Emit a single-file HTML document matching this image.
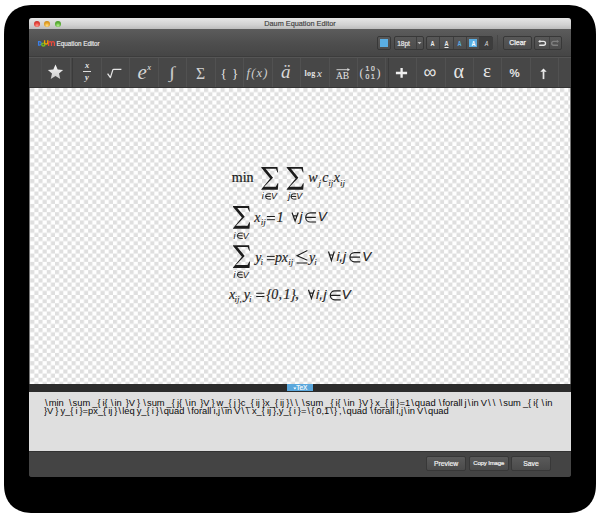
<!DOCTYPE html>
<html><head><meta charset="utf-8">
<style>
*{margin:0;padding:0;box-sizing:border-box}
html,body{width:600px;height:518px;overflow:hidden;background:#fff;font-family:"Liberation Sans",sans-serif}
.a{position:absolute}
#win{left:29px;top:18px;width:542px;height:459px;background:#444;border-radius:3px;overflow:hidden}
#title{left:29px;top:18px;width:542px;height:11px;background:linear-gradient(#e6e6e6,#d2d2d2 60%,#bdbdbd);border-radius:3px 3px 0 0}
.tl{width:6.4px;height:6.4px;border-radius:50%;top:20.5px}
#ttext{left:29px;top:19.2px;width:542px;text-align:center;font-size:7.3px;line-height:9px;color:#3e3e3e;-webkit-text-stroke:0.15px #3e3e3e}
#tb1{left:29px;top:29px;width:542px;height:28px;background:linear-gradient(#5c5c5c,#4e4e4e 50%,#454545)}
#tb2{left:29px;top:56px;width:542px;height:32px;background:#474747;border-top:1px solid #3c3c3c;border-bottom:1px solid #343434;box-shadow:inset 0 1px 0 #555}
.div{width:1px;top:58px;height:29px;background:#515151}
#darkbar{left:29px;top:384px;width:542px;height:7.5px;background:#2b2b2b}
#tab{left:287px;top:384px;width:26px;height:7px;background:#5aa7dc;color:#fff;font-size:6px;line-height:7px;text-align:center}
#texta{left:29px;top:391.5px;width:542px;height:59.5px;background:#dfdfdf}
#code{left:44px;top:398.7px;width:530px;font-size:8.6px;line-height:8.7px;color:#0a0a0a;white-space:pre;transform:scaleX(1.0855);transform-origin:0 0;word-spacing:-0.543px}
#code i{font-style:normal;padding:0 1.012px}
#bbar{left:29px;top:451px;width:542px;height:26px;background:#444;border-top:1px solid #333;border-radius:0 0 3px 3px}
.btn{top:456px;height:15px;width:40px;border-radius:2px;background:linear-gradient(#5a5a5a,#4b4b4b);border:1px solid #383838;color:#f0f0f0;font-size:6.8px;line-height:13.6px;text-align:center;-webkit-text-stroke:0.2px #f0f0f0}
.tbtn{border-radius:2px;background:linear-gradient(#585858,#4c4c4c);border:1px solid #383838}
.ic{color:#e6e6e6}
</style></head><body>
<svg id="shadow" class="a" style="left:0;top:0" width="600" height="518"><path d="M4.00 35.00 L4.05 31.91 L4.21 29.50 L4.48 27.31 L4.85 25.27 L5.33 23.35 L5.92 21.53 L6.60 19.80 L7.39 18.16 L8.28 16.62 L9.26 15.16 L10.35 13.80 L11.53 12.53 L12.80 11.35 L14.16 10.26 L15.62 9.28 L17.16 8.39 L18.80 7.60 L20.53 6.92 L22.35 6.33 L24.27 5.85 L26.31 5.48 L28.50 5.21 L30.91 5.05 L34.00 5.00 L566.00 5.00 L569.09 5.05 L571.50 5.21 L573.69 5.48 L575.73 5.85 L577.65 6.33 L579.47 6.92 L581.20 7.60 L582.84 8.39 L584.38 9.28 L585.84 10.26 L587.20 11.35 L588.47 12.53 L589.65 13.80 L590.74 15.16 L591.72 16.62 L592.61 18.16 L593.40 19.80 L594.08 21.53 L594.67 23.35 L595.15 25.27 L595.52 27.31 L595.79 29.50 L595.95 31.91 L596.00 35.00 L596.00 483.00 L595.95 486.09 L595.79 488.50 L595.52 490.69 L595.15 492.73 L594.67 494.65 L594.08 496.47 L593.40 498.20 L592.61 499.84 L591.72 501.38 L590.74 502.84 L589.65 504.20 L588.47 505.47 L587.20 506.65 L585.84 507.74 L584.38 508.72 L582.84 509.61 L581.20 510.40 L579.47 511.08 L577.65 511.67 L575.73 512.15 L573.69 512.52 L571.50 512.79 L569.09 512.95 L566.00 513.00 L34.00 513.00 L30.91 512.95 L28.50 512.79 L26.31 512.52 L24.27 512.15 L22.35 511.67 L20.53 511.08 L18.80 510.40 L17.16 509.61 L15.62 508.72 L14.16 507.74 L12.80 506.65 L11.53 505.47 L10.35 504.20 L9.26 502.84 L8.28 501.38 L7.39 499.84 L6.60 498.20 L5.92 496.47 L5.33 494.65 L4.85 492.73 L4.48 490.69 L4.21 488.50 L4.05 486.09 L4.00 483.00Z" fill="#000"/></svg>
<div id="win" class="a"></div>
<div id="title" class="a"></div>
<div class="a tl" style="left:33.8px;background:radial-gradient(circle at 50% 75%,#ff9c8c,#e8473f 45%,#c8302a 80%,#8e1f1b)"></div>
<div class="a tl" style="left:44.1px;background:radial-gradient(circle at 50% 75%,#ffe28a,#e8a52a 45%,#cc8a18 80%,#8c5a0a)"></div>
<div class="a tl" style="left:54.6px;background:radial-gradient(circle at 50% 75%,#b8f090,#62b53c 45%,#4a9a2a 80%,#2e6a18)"></div>
<div id="ttext" class="a">Daum Equation Editor</div>
<div id="tb1" class="a"></div>
<div id="tb2" class="a"></div>
<svg class="a" style="left:37px;top:39px" width="19" height="9" viewBox="0 0 19 9">
 <path d="M1.6 2.6 h0.8 a1.75 1.75 0 0 1 0 3.5 h-0.8 z" fill="none" stroke="#3b7fe8" stroke-width="1.3"/>
 <circle cx="6.2" cy="5.6" r="1.45" fill="none" stroke="#78c020" stroke-width="1.3"/><path d="M7.65 4.0 v3.3" stroke="#78c020" stroke-width="1.3"/>
 <path d="M7.6 1.2 v2.2 a1.6 1.6 0 0 0 3.2 0 v-2.2 M10.8 3.4 v1.6" fill="none" stroke="#f2a600" stroke-width="1.3"/>
 <path d="M11.6 2.6 v4.4 M11.6 4.1 a1.45 1.45 0 0 1 2.9 0 v2.9 M14.5 4.1 a1.45 1.45 0 0 1 2.9 0 v2.9" fill="none" stroke="#e84a3c" stroke-width="1.3"/>
</svg>
<div class="a" style="left:56.6px;top:39.5px;font-size:6.3px;line-height:8px;color:#ececec;-webkit-text-stroke:0.15px #ececec">Equation Editor</div>
<div class="a tbtn" style="left:376.5px;top:36.3px;width:14px;height:13.4px"></div>
<div class="a" style="left:380px;top:39px;width:7.5px;height:7.7px;background:#5aaee3"></div>
<div class="a tbtn" style="left:394px;top:36.3px;width:29.5px;height:13.4px"></div>
<div class="a" style="left:415.5px;top:37px;width:1px;height:12px;background:#3e3e3e"></div>
<div class="a" style="left:397.3px;top:38.6px;font-size:6.6px;line-height:9px;color:#e8e8e8;letter-spacing:-0.1px;-webkit-text-stroke:0.2px #e8e8e8">18pt</div>
<svg class="a" style="left:417px;top:41px" width="5" height="4"><path d="M0.5 1 h4 l-2 2.2z" fill="#bbb"/></svg>
<div class="a tbtn" style="left:425.5px;top:36.3px;width:67.5px;height:13.4px"></div>
<div class="a" style="left:479.5px;top:37px;width:13px;height:12px;background:#3d3d3d"></div>
<div class="a" style="left:439px;top:37px;width:1px;height:12px;background:#3e3e3e"></div>
<div class="a" style="left:452.5px;top:37px;width:1px;height:12px;background:#3e3e3e"></div>
<div class="a" style="left:466px;top:37px;width:1px;height:12px;background:#3e3e3e"></div>
<div class="a" style="left:479px;top:37px;width:1px;height:12px;background:#3e3e3e"></div>
<div class="a" style="left:468.8px;top:38.7px;width:8px;height:8.8px;background:#5aaee3"></div>
<div class="a" style="left:426px;top:38.8px;width:13px;text-align:center;font-size:6.8px;line-height:9px;transform:scaleX(0.82);color:#eee;font-weight:bold">A</div>
<div class="a" style="left:439.5px;top:38.8px;width:13px;text-align:center;font-size:6.8px;line-height:9px;transform:scaleX(0.82);color:#eee;font-weight:bold;text-decoration:underline">A</div>
<div class="a" style="left:453px;top:38.8px;width:13px;text-align:center;font-size:6.8px;line-height:9px;transform:scaleX(0.82);color:#5aaee3;font-weight:bold">A</div>
<div class="a" style="left:466.5px;top:38.8px;width:13px;text-align:center;font-size:6.8px;line-height:9px;transform:scaleX(0.82);color:#fff;font-weight:bold">A</div>
<div class="a" style="left:480px;top:38.8px;width:13px;text-align:center;font-size:6.8px;line-height:9px;transform:scaleX(0.82);color:#ddd;font-style:italic">A</div>
<div class="a" style="left:497px;top:35px;width:1px;height:16px;background:#474747"></div>
<div class="a tbtn" style="left:502.7px;top:36.3px;width:29.7px;height:13.4px;color:#f2f2f2;font-size:7px;line-height:11.6px;text-align:center;-webkit-text-stroke:0.25px #f2f2f2">Clear</div>
<div class="a tbtn" style="left:534.4px;top:36.3px;width:27.6px;height:13.4px"></div>
<div class="a" style="left:548.5px;top:37px;width:1px;height:12px;background:#424242"></div>
<svg class="a" style="left:537px;top:38px" width="24" height="10" viewBox="0 0 24 10">
 <path d="M2.6 3.4 h4.0 a1.9 1.9 0 0 1 0 3.8 h-4.4" fill="none" stroke="#e6e6e6" stroke-width="1.35"/><path d="M1.2 3.4 l2.1 -1.7 v3.4z" fill="#e6e6e6"/>
 <path d="M20.6 3.4 h-4.0 a1.9 1.9 0 0 0 0 3.8 h4.4" fill="none" stroke="#808080" stroke-width="1.35"/><path d="M22 3.4 l-2.1 -1.7 v3.4z" fill="#808080"/>
</svg>

<div class="a div" style="left:41.0px;background:#4c4c4c"></div><div class="a div" style="left:70.0px"></div><div class="a div" style="left:72.0px;background:#3b3b3b"></div><div class="a div" style="left:100.5px"></div><div class="a div" style="left:129.0px"></div><div class="a div" style="left:157.5px"></div><div class="a div" style="left:186.0px"></div><div class="a div" style="left:214.5px"></div><div class="a div" style="left:243.0px"></div><div class="a div" style="left:271.5px"></div><div class="a div" style="left:300.0px"></div><div class="a div" style="left:328.5px"></div><div class="a div" style="left:357.0px"></div><div class="a div" style="left:385.0px"></div><div class="a div" style="left:388.0px;background:#3b3b3b"></div><div class="a div" style="left:416.0px"></div><div class="a div" style="left:444.5px"></div><div class="a div" style="left:472.5px"></div><div class="a div" style="left:501.0px"></div><div class="a div" style="left:529.5px"></div><div class="a div" style="left:557.5px"></div>
<svg class="a" style="left:47px;top:64px" width="17" height="16" viewBox="0.3 0 16.4 15.5"><defs><linearGradient id="sg" x1="0" y1="0" x2="0" y2="1"><stop offset="0" stop-color="#fafafa"/><stop offset="1" stop-color="#c8c8c8"/></linearGradient></defs>
<path d="M8.5 0.5 L10.6 5.4 L15.9 5.8 L11.9 9.3 L13.1 14.5 L8.5 11.7 L3.9 14.5 L5.1 9.3 L1.1 5.8 L6.4 5.4 Z" fill="url(#sg)"/></svg>
<div class="a ic" style="left:82px;top:61.3px;width:10px;text-align:center;font:italic bold 8.5px/8px 'Liberation Serif',serif;color:#e8e8e8">x</div>
<div class="a" style="left:82.7px;top:71.2px;width:8px;height:1px;background:#ddd"></div>
<div class="a ic" style="left:82px;top:73.3px;width:10px;text-align:center;font:italic bold 8.5px/8px 'Liberation Serif',serif;color:#e8e8e8">y</div>
<svg class="a" style="left:106px;top:68px" width="17" height="12" viewBox="0 0 17 12"><path d="M1.6 5.6 L4.4 9.6 L6.9 1.6 Q7.1 1.4 7.6 1.4 H15.4" fill="none" stroke="#e4e4e4" stroke-width="1.25" stroke-linejoin="round"/></svg>
<div class="a ic" style="left:137.4px;top:61px;font:italic 21px/22px 'Liberation Serif',serif;color:#d4d4d4">e</div>
<div class="a ic" style="left:147.3px;top:62.6px;font:italic 8.5px/8px 'Liberation Serif',serif">x</div>
<div class="a ic" style="left:168.5px;top:64px;font:16.5px/18px 'Liberation Serif',serif;color:#c8c8c8;transform:scaleX(1.3);transform-origin:0 0">&#8747;</div>
<div class="a ic" style="left:195.6px;top:64.3px;font:16.5px/20px 'Liberation Serif',serif;color:#d0d0d0;transform:scaleX(0.95);transform-origin:0 0">&#931;</div>
<div class="a ic" style="left:220.5px;top:65.5px;font:13px/16px 'Liberation Serif',serif">{</div><div class="a ic" style="left:232px;top:65.5px;font:13px/16px 'Liberation Serif',serif">}</div>
<div class="a ic" style="left:246.5px;top:64.5px;font:italic 12.5px/16px 'Liberation Serif',serif;color:#d0d0d0;letter-spacing:1.2px">f(x)</div>
<div class="a ic" style="left:281px;top:61px;font:italic 19px/22px 'Liberation Serif',serif;color:#d8d8d8">&#228;</div>
<div class="a ic" style="left:304.5px;top:67.5px;font:bold 8px/12px 'Liberation Serif',serif;letter-spacing:0.3px">log</div>
<div class="a ic" style="left:317px;top:65.5px;font:italic 11px/14px 'Liberation Serif',serif">x</div>
<svg class="a" style="left:336px;top:66.5px" width="15" height="5" viewBox="0 0 15 5"><path d="M0.5 2.7 h12" stroke="#ddd" stroke-width="0.9"/><path d="M14 2.7 l-2.6 -1.6 v3.2z" fill="#ddd"/></svg>
<div class="a ic" style="left:336px;top:71px;font:9.5px/10px 'Liberation Serif',serif">AB</div>
<div class="a ic" style="left:359.5px;top:66px;font:12px/14px 'Liberation Serif',serif;color:#ddd">(</div>
<div class="a ic" style="left:376.5px;top:66px;font:12px/14px 'Liberation Serif',serif;color:#ddd">)</div>
<div class="a ic" style="left:365.5px;top:66.2px;font:6.8px/6px 'Liberation Sans',sans-serif;color:#e0e0e0;letter-spacing:1.6px;-webkit-text-stroke:0.2px #e0e0e0">10</div>
<div class="a ic" style="left:365.5px;top:74.3px;font:6.8px/6px 'Liberation Sans',sans-serif;color:#e0e0e0;letter-spacing:1.6px;-webkit-text-stroke:0.2px #e0e0e0">01</div>
<svg class="a" style="left:395px;top:67px" width="13" height="12" viewBox="0 0 13 12"><path d="M6.6 1.0 v9.8 M0.9 6.0 h11.2" stroke="#f0f0f0" stroke-width="2.3"/></svg>
<div class="a ic" style="left:423.5px;top:61.5px;font:18px/20px 'Liberation Sans',sans-serif">&#8734;</div>
<div class="a ic" style="left:453.5px;top:58.5px;font:20px/24px 'Liberation Serif',serif">&#945;</div>
<div class="a ic" style="left:483px;top:58.5px;font:19px/24px 'Liberation Serif',serif">&#949;</div>
<div class="a ic" style="left:509.5px;top:66px;font:bold 11.5px/14px 'Liberation Sans',sans-serif">%</div>
<svg class="a" style="left:540.3px;top:67.5px" width="7" height="12" viewBox="0 0 7 12"><path d="M3.5 3.5 v7.6" stroke="#e8e8e8" stroke-width="1.7"/><path d="M3.5 0.4 l3.2 3.3 h-6.4z" fill="#f0f0f0"/></svg>
<svg id="canvas" class="a" width="542" height="296" style="left:29px;top:88px"><defs><pattern id="ck" x="1.2" y="0" width="8.278" height="8.278" patternUnits="userSpaceOnUse"><rect width="8.278" height="8.278" fill="#fff"/><rect width="4.139" height="4.139" fill="#dfdfdf"/><rect x="4.139" y="4.139" width="4.139" height="4.139" fill="#dfdfdf"/></pattern></defs><rect width="542" height="296" fill="url(#ck)"/><rect x="0" y="0" width="1" height="296" fill="#777"/><rect x="541" y="0" width="1" height="296" fill="#777"/></svg>
<!--EQ--><svg class="a" style="left:0;top:0" width="600" height="518"><text x="231.81" y="182.20" font-family="'Liberation Serif',serif" font-size="14.00" fill="#1c1c1c" stroke="#1c1c1c" stroke-width="0.22">min</text><path d="M261.30 167.00 L277.42 167.00 L278.10 172.38 L277.52 172.38 L275.96 168.79 L265.60 168.79 L273.02 177.65 L264.23 186.81 L275.76 186.81 L277.71 183.23 L278.30 183.23 L277.81 189.80 L261.30 189.80 L261.30 189.30 L270.19 178.45 L261.30 167.80Z" fill="#1c1c1c"/><text x="261.76" y="199.30" font-family="'Liberation Sans',sans-serif" font-size="8.80" font-style="italic" fill="#1c1c1c" stroke="#1c1c1c" stroke-width="0.05">i</text><path d="M271.00 193.80 H268.25 A2.65 2.65 0 0 0 268.25 199.10 H271.00 M265.60 196.45 H270.70" fill="none" stroke="#1c1c1c" stroke-width="1.00"/><text x="270.94" y="199.30" font-family="'Liberation Sans',sans-serif" font-size="8.80" font-style="italic" fill="#1c1c1c" stroke="#1c1c1c" stroke-width="0.05">V</text><path d="M286.70 167.00 L302.82 167.00 L303.50 172.38 L302.92 172.38 L301.36 168.79 L291.00 168.79 L298.42 177.65 L289.63 186.81 L301.16 186.81 L303.11 183.23 L303.70 183.23 L303.21 189.80 L286.70 189.80 L286.70 189.30 L295.59 178.45 L286.70 167.80Z" fill="#1c1c1c"/><text x="288.28" y="199.30" font-family="'Liberation Sans',sans-serif" font-size="8.80" font-style="italic" fill="#1c1c1c" stroke="#1c1c1c" stroke-width="0.05">j</text><path d="M296.40 193.80 H293.65 A2.65 2.65 0 0 0 293.65 199.10 H296.40 M291.00 196.45 H296.10" fill="none" stroke="#1c1c1c" stroke-width="1.00"/><text x="296.34" y="199.30" font-family="'Liberation Sans',sans-serif" font-size="8.80" font-style="italic" fill="#1c1c1c" stroke="#1c1c1c" stroke-width="0.05">V</text><text x="308.27" y="181.80" font-family="'Liberation Serif',serif" font-size="14.00" font-style="italic" fill="#1c1c1c" stroke="#1c1c1c" stroke-width="0.14">w</text><text x="318.46" y="185.70" font-family="'Liberation Serif',serif" font-size="9.00" font-style="italic" fill="#1c1c1c" stroke="#1c1c1c" stroke-width="0.05">j</text><text x="322.37" y="181.80" font-family="'Liberation Serif',serif" font-size="14.00" font-style="italic" fill="#1c1c1c" stroke="#1c1c1c" stroke-width="0.14">c</text><text x="328.30" y="185.70" font-family="'Liberation Serif',serif" font-size="9.00" font-style="italic" fill="#1c1c1c" stroke="#1c1c1c" stroke-width="0.05">ij</text><text x="333.77" y="181.80" font-family="'Liberation Serif',serif" font-size="14.00" font-style="italic" fill="#1c1c1c" stroke="#1c1c1c" stroke-width="0.14">x</text><text x="340.10" y="185.70" font-family="'Liberation Serif',serif" font-size="9.00" font-style="italic" fill="#1c1c1c" stroke="#1c1c1c" stroke-width="0.05">ij</text><path d="M233.00 206.10 L249.12 206.10 L249.80 211.45 L249.22 211.45 L247.66 207.88 L237.30 207.88 L244.72 216.71 L235.93 225.83 L247.46 225.83 L249.41 222.26 L250.00 222.26 L249.51 228.80 L233.00 228.80 L233.00 228.30 L241.89 217.50 L233.00 206.89Z" fill="#1c1c1c"/><text x="233.56" y="238.60" font-family="'Liberation Sans',sans-serif" font-size="8.80" font-style="italic" fill="#1c1c1c" stroke="#1c1c1c" stroke-width="0.05">i</text><path d="M242.80 233.10 H240.05 A2.65 2.65 0 0 0 240.05 238.40 H242.80 M237.40 235.75 H242.50" fill="none" stroke="#1c1c1c" stroke-width="1.00"/><text x="242.74" y="238.60" font-family="'Liberation Sans',sans-serif" font-size="8.80" font-style="italic" fill="#1c1c1c" stroke="#1c1c1c" stroke-width="0.05">V</text><text x="254.27" y="221.50" font-family="'Liberation Serif',serif" font-size="14.00" font-style="italic" fill="#1c1c1c" stroke="#1c1c1c" stroke-width="0.14">x</text><text x="260.70" y="224.60" font-family="'Liberation Serif',serif" font-size="9.00" font-style="italic" fill="#1c1c1c" stroke="#1c1c1c" stroke-width="0.05">ij</text><path d="M266.90 216.50 H274.90 M266.90 219.70 H274.90" fill="none" stroke="#1c1c1c" stroke-width="1.00"/><text x="276.48" y="221.60" font-family="'Liberation Serif',serif" font-size="14.50" font-style="italic" fill="#1c1c1c" stroke="#1c1c1c" stroke-width="0.14">1</text><path d="M291.98 212.46 L295.10 221.04 L298.22 212.46 M293.42 215.82 H296.78" fill="none" stroke="#1c1c1c" stroke-width="1.20"/><text x="299.40" y="221.40" font-family="'Liberation Sans',sans-serif" font-size="13.40" font-style="italic" fill="#1c1c1c" stroke="#1c1c1c" stroke-width="0.14">j</text><path d="M316.10 212.80 H310.30 A4.60 4.60 0 0 0 310.30 222.00 H316.10 M305.70 217.40 H315.80" fill="none" stroke="#1c1c1c" stroke-width="1.20"/><text x="317.74" y="221.40" font-family="'Liberation Sans',sans-serif" font-size="13.40" font-style="italic" fill="#1c1c1c" stroke="#1c1c1c" stroke-width="0.14">V</text><path d="M233.00 245.30 L249.12 245.30 L249.80 250.68 L249.22 250.68 L247.66 247.09 L237.30 247.09 L244.72 255.95 L235.93 265.11 L247.46 265.11 L249.41 261.53 L250.00 261.53 L249.51 268.10 L233.00 268.10 L233.00 267.60 L241.89 256.75 L233.00 246.10Z" fill="#1c1c1c"/><text x="233.56" y="277.60" font-family="'Liberation Sans',sans-serif" font-size="8.80" font-style="italic" fill="#1c1c1c" stroke="#1c1c1c" stroke-width="0.05">i</text><path d="M242.80 272.10 H240.05 A2.65 2.65 0 0 0 240.05 277.40 H242.80 M237.40 274.75 H242.50" fill="none" stroke="#1c1c1c" stroke-width="1.00"/><text x="242.74" y="277.60" font-family="'Liberation Sans',sans-serif" font-size="8.80" font-style="italic" fill="#1c1c1c" stroke="#1c1c1c" stroke-width="0.05">V</text><text x="255.37" y="261.50" font-family="'Liberation Serif',serif" font-size="14.00" font-style="italic" fill="#1c1c1c" stroke="#1c1c1c" stroke-width="0.14">y</text><text x="260.50" y="264.50" font-family="'Liberation Serif',serif" font-size="9.00" font-style="italic" fill="#1c1c1c" stroke="#1c1c1c" stroke-width="0.05">i</text><path d="M266.90 256.40 H274.70 M266.90 259.70 H274.70" fill="none" stroke="#1c1c1c" stroke-width="1.00"/><text x="275.12" y="261.50" font-family="'Liberation Serif',serif" font-size="14.00" font-style="italic" fill="#1c1c1c" stroke="#1c1c1c" stroke-width="0.14">p</text><text x="281.77" y="261.50" font-family="'Liberation Serif',serif" font-size="14.00" font-style="italic" fill="#1c1c1c" stroke="#1c1c1c" stroke-width="0.14">x</text><text x="288.30" y="264.50" font-family="'Liberation Serif',serif" font-size="9.00" font-style="italic" fill="#1c1c1c" stroke="#1c1c1c" stroke-width="0.05">ij</text><path d="M307.40 250.50 L297.06 255.70 L307.40 260.25 M296.60 262.95 H307.40" fill="none" stroke="#1c1c1c" stroke-width="1.10"/><text x="309.07" y="261.50" font-family="'Liberation Serif',serif" font-size="14.00" font-style="italic" fill="#1c1c1c" stroke="#1c1c1c" stroke-width="0.14">y</text><text x="314.20" y="264.50" font-family="'Liberation Serif',serif" font-size="9.00" font-style="italic" fill="#1c1c1c" stroke="#1c1c1c" stroke-width="0.05">i</text><path d="M328.48 251.46 L331.40 260.44 L334.32 251.46 M329.84 254.98 H332.96" fill="none" stroke="#1c1c1c" stroke-width="1.20"/><text x="336.38" y="260.90" font-family="'Liberation Sans',sans-serif" font-size="13.40" font-style="italic" fill="#1c1c1c" stroke="#1c1c1c" stroke-width="0.14">i</text><text x="339.26" y="260.90" font-family="'Liberation Sans',sans-serif" font-size="13.40" font-style="italic" fill="#1c1c1c" stroke="#1c1c1c" stroke-width="0.14">,</text><text x="343.10" y="260.90" font-family="'Liberation Sans',sans-serif" font-size="13.40" font-style="italic" fill="#1c1c1c" stroke="#1c1c1c" stroke-width="0.14">j</text><path d="M360.30 252.60 H354.50 A4.60 4.60 0 0 0 354.50 261.80 H360.30 M349.90 257.20 H360.00" fill="none" stroke="#1c1c1c" stroke-width="1.20"/><text x="362.14" y="260.90" font-family="'Liberation Sans',sans-serif" font-size="13.40" font-style="italic" fill="#1c1c1c" stroke="#1c1c1c" stroke-width="0.14">V</text><text x="228.97" y="298.80" font-family="'Liberation Serif',serif" font-size="14.00" font-style="italic" fill="#1c1c1c" stroke="#1c1c1c" stroke-width="0.14">x</text><text x="234.60" y="301.80" font-family="'Liberation Serif',serif" font-size="9.00" font-style="italic" fill="#1c1c1c" stroke="#1c1c1c" stroke-width="0.05">ij,</text><text x="243.87" y="298.80" font-family="'Liberation Serif',serif" font-size="14.00" font-style="italic" fill="#1c1c1c" stroke="#1c1c1c" stroke-width="0.14">y</text><text x="249.10" y="301.80" font-family="'Liberation Serif',serif" font-size="9.00" font-style="italic" fill="#1c1c1c" stroke="#1c1c1c" stroke-width="0.05">i</text><path d="M256.20 293.30 H264.40 M256.20 296.50 H264.40" fill="none" stroke="#1c1c1c" stroke-width="1.00"/><text x="266.35" y="298.80" font-family="'Liberation Serif',serif" font-size="14.00" font-style="italic" fill="#1c1c1c" stroke="#1c1c1c" stroke-width="0.14">{</text><text x="271.36" y="298.80" font-family="'Liberation Serif',serif" font-size="14.00" font-style="italic" fill="#1c1c1c" stroke="#1c1c1c" stroke-width="0.14">0</text><text x="278.44" y="298.80" font-family="'Liberation Serif',serif" font-size="14.00" font-style="italic" fill="#1c1c1c" stroke="#1c1c1c" stroke-width="0.14">,</text><text x="283.18" y="298.90" font-family="'Liberation Serif',serif" font-size="14.50" font-style="italic" fill="#1c1c1c" stroke="#1c1c1c" stroke-width="0.14">1</text><text x="290.25" y="298.80" font-family="'Liberation Serif',serif" font-size="14.00" font-style="italic" fill="#1c1c1c" stroke="#1c1c1c" stroke-width="0.14">}</text><text x="295.27" y="298.80" font-family="'Liberation Serif',serif" font-size="14.00" fill="#1c1c1c" stroke="#1c1c1c" stroke-width="0.22">,</text><path d="M308.48 289.76 L311.40 298.44 L314.32 289.76 M309.84 293.16 H312.96" fill="none" stroke="#1c1c1c" stroke-width="1.20"/><text x="315.88" y="298.80" font-family="'Liberation Sans',sans-serif" font-size="13.40" font-style="italic" fill="#1c1c1c" stroke="#1c1c1c" stroke-width="0.14">i</text><text x="319.26" y="298.80" font-family="'Liberation Sans',sans-serif" font-size="13.40" font-style="italic" fill="#1c1c1c" stroke="#1c1c1c" stroke-width="0.14">,</text><text x="323.40" y="298.80" font-family="'Liberation Sans',sans-serif" font-size="13.40" font-style="italic" fill="#1c1c1c" stroke="#1c1c1c" stroke-width="0.14">j</text><path d="M340.70 290.80 H334.80 A4.50 4.50 0 0 0 334.80 299.80 H340.70 M330.30 295.30 H340.40" fill="none" stroke="#1c1c1c" stroke-width="1.20"/><text x="341.84" y="298.80" font-family="'Liberation Sans',sans-serif" font-size="13.40" font-style="italic" fill="#1c1c1c" stroke="#1c1c1c" stroke-width="0.14">V</text></svg><!--/EQ-->
<div id="darkbar" class="a"></div>
<div id="tab" class="a"></div><svg class="a" style="left:292.5px;top:386.5px" width="4" height="3"><path d="M0.3 0.4 H3.5 L1.9 2.6Z" fill="#fff"/></svg><div class="a" style="left:296.2px;top:384.3px;font-size:6.4px;line-height:7px;color:#fff;-webkit-text-stroke:0.15px #fff">TeX</div>
<div id="texta" class="a"></div>
<div id="code" class="a"><i>\</i>min  <i>\</i>sum _{ i{ <i>\</i>in  }V } <i>\</i>sum _{ j{ <i>\</i>in  }V } w_{ j }c_{ ij }x_{ ij }<i>\</i><i>\</i> <i>\</i>sum _{ i{ <i>\</i>in  }V } x_{ ij }=1<i>\</i>quad <i>\</i>forall j<i>\</i>in V<i>\</i><i>\</i> <i>\</i>sum _{ i{ <i>\</i>in
}V } y_{ i }=px_{ ij }<i>\</i>leq y_{ i }<i>\</i>quad <i>\</i>forall i,j<i>\</i>in V<i>\</i><i>\</i> x_{ ij },y_{ i }=<i>\</i>{ 0,1<i>\</i>} ,<i>\</i>quad <i>\</i>forall i,j<i>\</i>in V<i>\</i>quad</div>
<div id="bbar" class="a"></div>
<div class="a btn" style="left:426px">Preview</div>
<div class="a btn" style="left:468.7px;font-size:6px;letter-spacing:-0.15px">Copy Image</div>
<div class="a btn" style="left:511px">Save</div>
</body></html>
